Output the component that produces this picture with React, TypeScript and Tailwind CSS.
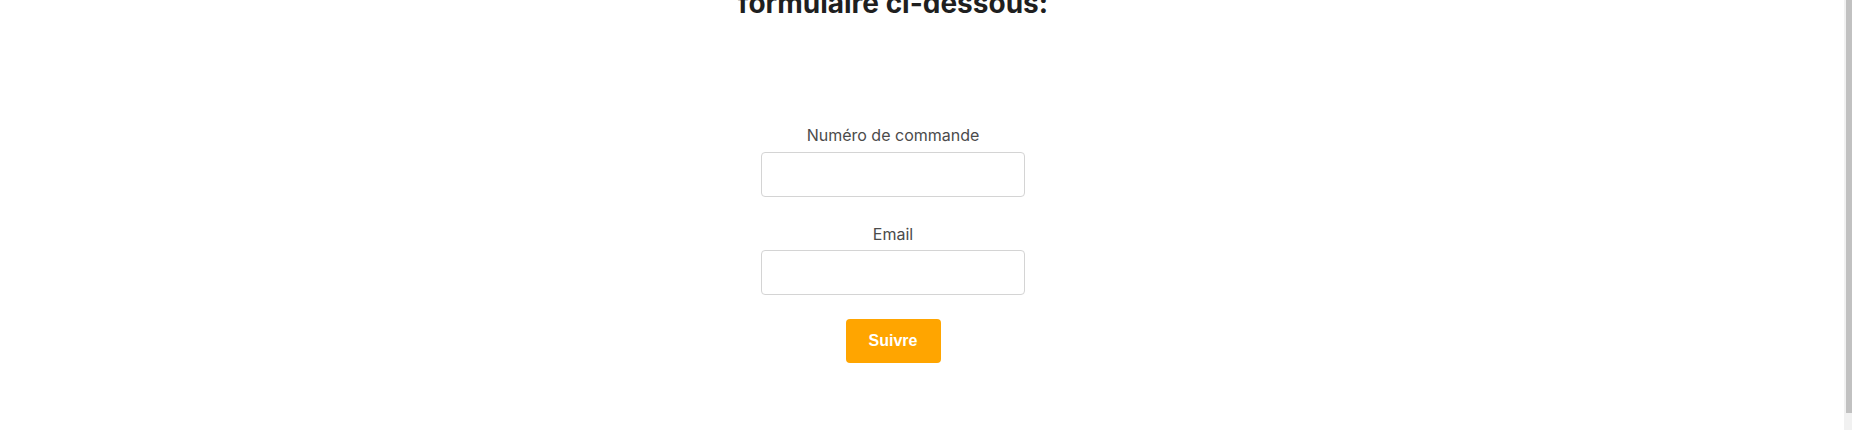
import { useState } from "react";

const TrackOrder = () => {
  const [orderNumber, setOrderNumber] = useState("");
  const [email, setEmail] = useState("");

  return (
    <div className="flex h-[430px] w-full overflow-hidden bg-white">
      {/* Page content */}
      <div className="flex flex-1 flex-col items-center pr-[58px] font-['Inter',sans-serif]">
        <h2 className="-mt-[14px] text-[28px] leading-[34px] font-bold text-[#1f1f1f]">
          formulaire ci-dessous:
        </h2>

        <form
          className="mt-[103px] flex flex-col items-center"
          onSubmit={(e) => e.preventDefault()}
        >
          <label className="text-base leading-6 text-[#4b4b4b]">Numéro de commande</label>
          <input
            type="text"
            value={orderNumber}
            onChange={(e) => setOrderNumber(e.target.value)}
            className="mt-[5px] h-[45px] w-[264px] rounded-[4px] border border-[#d4d4d4] px-3 focus:outline-none"
          />

          <label className="mt-[25px] text-base leading-6 text-[#4b4b4b]">Email</label>
          <input
            type="email"
            value={email}
            onChange={(e) => setEmail(e.target.value)}
            className="mt-[4px] h-[45px] w-[264px] rounded-[4px] border border-[#d4d4d4] px-3 focus:outline-none"
          />

          <button
            type="submit"
            className="mt-[24px] h-[44px] w-[95px] rounded-[4px] bg-[#ffa500] font-['Liberation_Sans',Arial,sans-serif] text-base font-bold text-white"
          >
            Suivre
          </button>
        </form>
      </div>

      {/* Scrollbar */}
      <div className="flex w-[8px] flex-col bg-[#f1f1f1]">
        <div className="ml-[2px] h-[413px] bg-[#c1c1c1]" />
      </div>
    </div>
  );
};

export default TrackOrder;
